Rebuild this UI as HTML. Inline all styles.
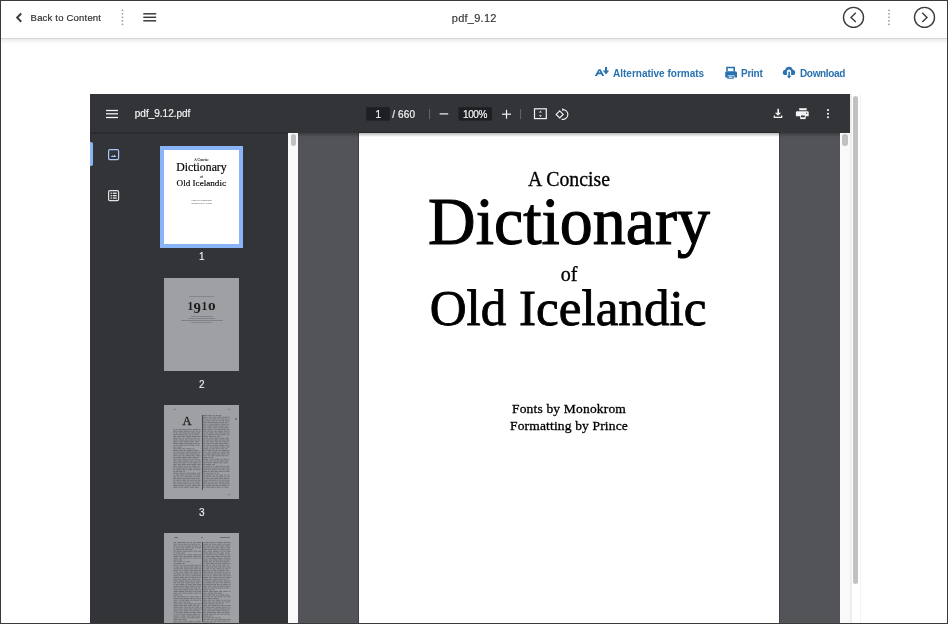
<!DOCTYPE html>
<html><head><meta charset="utf-8">
<style>
*{box-sizing:border-box;margin:0;padding:0}
html,body{width:948px;height:624px;overflow:hidden;background:#fff}
body{position:relative;will-change:transform;font-family:"Liberation Sans",sans-serif}
.abs{position:absolute}
#frame{position:absolute;left:0;top:0;width:948px;height:624px;border:1px solid #3a3a3a;z-index:50;pointer-events:none}
#hdr{position:absolute;left:0;top:0;width:948px;height:39px;background:#fff;border-bottom:1px solid #d6d6d6}
#shadow{position:absolute;left:0;top:39px;width:948px;height:5px;background:linear-gradient(#ececec,#fff)}
.txt{position:absolute;white-space:nowrap;line-height:1}
#viewer{position:absolute;left:90px;top:94px;width:760px;height:530px;background:#333438}
#tb{position:absolute;left:0;top:0;width:760px;height:39px;background:#333438}
#side{position:absolute;left:0;top:39px;width:198px;height:491px;background:#333438}
#strack{position:absolute;left:198px;top:39px;width:10px;height:491px;background:#f9f9f9}
#main{position:absolute;left:208px;top:39px;width:542px;height:491px;background:#535458}
#mtrack{position:absolute;left:750px;top:39px;width:10px;height:491px;background:#f9f9f9}
#page{position:absolute;left:269px;top:39px;width:420px;height:491px;background:#fff;box-shadow:0 0 0 1px rgba(0,0,0,0.22)}
.pg{position:absolute;width:420px;height:525px;z-index:4}
.thumbg{width:75px;background:#9fa0a4;z-index:2;overflow:hidden}
.col{background:repeating-linear-gradient(#7d7e82 0 0.9px,#95969a 0.9px 1.75px)}
.lbl{position:absolute;left:164.3px;width:75px;text-align:center;font-size:10px;font-weight:normal;-webkit-text-stroke:0.12px #f1f3f4;line-height:1;color:#f1f3f4;z-index:3}
.ptxt{position:absolute;left:0;width:420px;text-align:center;line-height:1;white-space:nowrap;font-family:"Liberation Serif",serif;color:#000;z-index:4}
.th .sm{opacity:0.55}
.serif{font-family:"Liberation Serif",serif;color:#111}
</style></head><body>
<div id="hdr"></div>
<div id="shadow"></div>
<svg class="abs" style="left:0;top:0" width="948" height="90" viewBox="0 0 948 90">
  <path d="M21.2 13.5 L17.2 17.6 L21.2 21.7" fill="none" stroke="#3b3b3b" stroke-width="2"/>
  <g fill="#9a9a9a"><circle cx="122.5" cy="10.3" r="0.9"/><circle cx="122.5" cy="13.8" r="0.9"/><circle cx="122.5" cy="17.3" r="0.9"/><circle cx="122.5" cy="20.8" r="0.9"/><circle cx="122.5" cy="24.3" r="0.9"/></g>
  <g stroke="#3b3b3b" stroke-width="1.5"><line x1="143.3" y1="13.8" x2="156.2" y2="13.8"/><line x1="143.3" y1="17.3" x2="156.2" y2="17.3"/><line x1="143.3" y1="20.8" x2="156.2" y2="20.8"/></g>
  <circle cx="853.5" cy="17.4" r="10" fill="none" stroke="#3b3b3b" stroke-width="1.4"/>
  <path d="M855.8 12.8 L851 17.4 L855.8 22" fill="none" stroke="#3b3b3b" stroke-width="1.4"/>
  <g fill="#9a9a9a"><circle cx="889" cy="10.3" r="0.9"/><circle cx="889" cy="13.8" r="0.9"/><circle cx="889" cy="17.3" r="0.9"/><circle cx="889" cy="20.8" r="0.9"/><circle cx="889" cy="24.3" r="0.9"/></g>
  <circle cx="924.5" cy="17.4" r="10" fill="none" stroke="#3b3b3b" stroke-width="1.4"/>
  <path d="M922.2 12.8 L927 17.4 L922.2 22" fill="none" stroke="#3b3b3b" stroke-width="1.4"/>
  <g fill="#2872b0">
    <path d="M594.8 76 L598.6 69.2 L600.6 69.2 L604.2 76 L602.1 76 L601.2 74.2 L598 74.2 L597 76 Z M598.7 72.6 L600.5 72.6 L599.6 70.8 Z"/>
    <path d="M605 67 L607 67 L607 70.6 L609.2 70.6 L606 74.6 L602.8 70.6 L605 70.6 Z"/>
    <path d="M726.2 66.8 h8.8 v4.5 h-1.6 v-3 h-5.6 v3 h-1.6 Z"/>
    <path d="M725.8 71.2 h9.6 a1.6 1.6 0 0 1 1.6 1.6 v4.6 h-2.6 v-2.2 h-6.6 v2.2 h-2.6 v-4.6 a1.6 1.6 0 0 1 1.6 -1.6 Z"/>
    <path d="M727.3 75.8 h6.4 v3 h-6.4 Z M728.7 76.6 v1.2 h3.6 v-1.2 Z" fill-rule="evenodd"/>
    <path d="M789 66.8 a4 4 0 0 1 3.8 2.9 a2.7 2.7 0 0 1 2.4 2.7 a2.7 2.7 0 0 1 -2.7 2.7 h-1.4 v-3.6 a2.1 2.1 0 0 0 -4.2 0 v3.6 h-1.4 a2.7 2.7 0 0 1 -2.7 -2.7 a2.7 2.7 0 0 1 2.4 -2.7 a4 4 0 0 1 3.8 -2.9 Z"/>
    <path d="M788.3 71.8 h1.6 v4 h1.5 l-2.3 2.6 l-2.3 -2.6 h1.5 Z"/>
  </g>
</svg>
<div class="txt" style="left:30.6px;top:13.2px;font-size:9.5px;letter-spacing:0.2px;color:#333;-webkit-text-stroke:0.2px #333">Back to Content</div>
<div class="txt" style="left:451.8px;top:13px;font-size:11px;letter-spacing:0.25px;color:#333;-webkit-text-stroke:0.15px #333">pdf_9.12</div>
<div class="txt" style="left:613px;top:68.5px;font-size:10px;font-weight:bold;color:#2872b0">Alternative formats</div>
<div class="txt" style="left:741px;top:68.5px;font-size:10px;letter-spacing:-0.25px;font-weight:bold;color:#2872b0">Print</div>
<div class="txt" style="left:800px;top:68.5px;font-size:10px;letter-spacing:-0.35px;font-weight:bold;color:#2872b0">Download</div>

<div id="viewer">
  <div id="tb"></div>
  <div id="side"></div>
  <div id="strack"></div>
  <div id="main"></div>
  <div id="mtrack"></div>
  <div id="page"></div>
</div>
<svg class="abs" style="left:0;top:0;z-index:5" width="948" height="140" viewBox="0 0 948 140">
  <g stroke="#f1f3f4" stroke-width="1.3"><line x1="106" y1="110.5" x2="118" y2="110.5"/><line x1="106" y1="113.8" x2="118" y2="113.8"/><line x1="106" y1="117.5" x2="118" y2="117.5"/></g>
  <rect x="366.3" y="107.2" width="23.5" height="13.4" fill="#1e1f22"/>
  <rect x="458.5" y="107.2" width="33.5" height="13.4" fill="#1e1f22"/>
  <line x1="429.6" y1="109" x2="429.6" y2="119.2" stroke="#6b6e72" stroke-width="0.9"/>
  <line x1="520.6" y1="109" x2="520.6" y2="119.2" stroke="#6b6e72" stroke-width="0.9"/>
  <line x1="439.6" y1="113.9" x2="448.2" y2="113.9" stroke="#f1f3f4" stroke-width="1.2"/>
  <g stroke="#f1f3f4" stroke-width="1.2"><line x1="502" y1="114.2" x2="511" y2="114.2"/><line x1="506.5" y1="109.8" x2="506.5" y2="118.7"/></g>
  <rect x="534.5" y="108.8" width="11.8" height="9.8" fill="none" stroke="#f1f3f4" stroke-width="1.2"/>
  <path d="M539 112.6 L540.4 110.7 L541.8 112.6 Z M539 115.2 L540.4 117.1 L541.8 115.2 Z" fill="#f1f3f4"/>
  <path d="M559.7 110.9 L563.2 114.4 L559.7 117.9 L556.2 114.4 Z" fill="none" stroke="#f1f3f4" stroke-width="1.2"/>
  <path d="M562.6 109.6 A4.9 4.9 0 1 1 561.6 119.2" fill="none" stroke="#f1f3f4" stroke-width="1.1"/>
  <path d="M562.3 108 L564.2 109.6 L562.3 111.3 Z" fill="#f1f3f4"/>
  <g fill="#f1f3f4">
    <rect x="777.4" y="108.8" width="1.6" height="4.4"/>
    <path d="M774.9 112.8 h6.2 l-3.1 2.9 Z"/>
    <path d="M773.7 115.5 h1.3 v1.3 h6 v-1.3 h1.3 v2.5 h-8.6 Z"/>
    <rect x="799.2" y="108.2" width="7.5" height="2.1"/>
    <path d="M798 111.3 h9.6 a1.1 1.1 0 0 1 1.1 1.1 v3.8 h-12.8 v-3.8 a1.1 1.1 0 0 1 1.1 -1.1 Z"/><rect x="800.2" y="114.9" width="5.5" height="4.2"/><rect x="801" y="115.5" width="3.8" height="1.7" fill="#333438"/><circle cx="806.6" cy="113.2" r="0.6" fill="#333438"/>
    <circle cx="828" cy="110.1" r="1.05"/><circle cx="828" cy="113.7" r="1.05"/><circle cx="828" cy="117.3" r="1.05"/>
  </g>
</svg>
<div class="txt" style="left:134.8px;top:109.3px;font-size:10px;color:#f1f3f4;-webkit-text-stroke:0.2px #f1f3f4;z-index:6">pdf_9.12.pdf</div>
<div class="txt" style="left:375.5px;top:109.8px;font-size:10px;color:#f1f3f4;-webkit-text-stroke:0.2px #f1f3f4;z-index:6">1</div>
<div class="txt" style="left:392.3px;top:109.8px;font-size:10px;letter-spacing:0.1px;color:#f1f3f4;-webkit-text-stroke:0.2px #f1f3f4;z-index:6">/ 660</div>
<div class="txt" style="left:463px;top:109.8px;font-size:10px;letter-spacing:-0.4px;color:#f1f3f4;-webkit-text-stroke:0.2px #f1f3f4;z-index:6">100%</div>
<div class="pg" style="left:359px;top:125.4px">
<div class="ptxt" style="top:43.6px;font-size:21.5px;transform:scaleX(0.92);-webkit-text-stroke:0.35px #000">A Concise</div>
<div class="ptxt" style="top:61.30px;font-size:69px;transform:scale(0.955,0.97);transform-origin:50% 57.8px;-webkit-text-stroke:1.1px #000">Dictionary</div>
<div class="ptxt" style="top:138.60px;font-size:20px;-webkit-text-stroke:0.35px #000">of</div>
<div class="ptxt" style="top:157.6px;font-size:50.5px;left:-1px;transform:scaleX(1.012);-webkit-text-stroke:0.85px #000">Old Icelandic</div>
<div class="ptxt sm" style="top:276.20px;font-size:13.5px;letter-spacing:0.18px;-webkit-text-stroke:0.3px #000">Fonts by Monokrom</div>
<div class="ptxt sm" style="top:293.7px;font-size:13.5px;letter-spacing:0.16px;-webkit-text-stroke:0.3px #000">Formatting by Prince</div>
</div>
<div class="pg th" style="left:164px;top:150px;transform:scale(0.17857);transform-origin:0 0;z-index:3">
<div class="ptxt" style="top:43.6px;font-size:21.5px;transform:scaleX(0.92);-webkit-text-stroke:0.35px #000">A Concise</div>
<div class="ptxt" style="top:61.30px;font-size:69px;transform:scale(0.955,0.97);transform-origin:50% 57.8px;-webkit-text-stroke:1.1px #000">Dictionary</div>
<div class="ptxt" style="top:138.60px;font-size:20px;-webkit-text-stroke:0.35px #000">of</div>
<div class="ptxt" style="top:157.6px;font-size:50.5px;left:-1px;transform:scaleX(1.012);-webkit-text-stroke:0.85px #000">Old Icelandic</div>
<div class="ptxt sm" style="top:276.20px;font-size:13.5px;letter-spacing:0.18px;-webkit-text-stroke:0.3px #000">Fonts by Monokrom</div>
<div class="ptxt sm" style="top:293.7px;font-size:13.5px;letter-spacing:0.16px;-webkit-text-stroke:0.3px #000">Formatting by Prince</div>
</div>
<div class="abs" style="left:90px;top:141.6px;width:2.6px;height:24.6px;background:#8ab4f8;border-radius:0 2px 2px 0;z-index:3"></div>
<svg class="abs" style="left:0;top:0;z-index:3" width="300" height="624" viewBox="0 0 300 624">
  <rect x="108.6" y="149.6" width="10" height="10" rx="1.3" fill="none" stroke="#a8c7fa" stroke-width="1.2"/>
  <path d="M110.8 157 L112.3 155.2 L113.3 156.3 L114.4 154.8 L116.4 157 Z" fill="#a8c7fa"/>
  <rect x="108.6" y="190.6" width="10" height="10" rx="1.3" fill="none" stroke="#e3e3e3" stroke-width="1.2"/>
  <g fill="#e3e3e3"><rect x="110.6" y="192.6" width="1.3" height="1.3"/><rect x="110.6" y="195" width="1.3" height="1.3"/><rect x="110.6" y="197.4" width="1.3" height="1.3"/>
  <rect x="112.8" y="192.6" width="3.9" height="1.3"/><rect x="112.8" y="195" width="3.9" height="1.3"/><rect x="112.8" y="197.4" width="3.9" height="1.3"/></g>
</svg>
<div class="abs" style="left:160px;top:146px;width:83.3px;height:102px;background:#8ab4f8;z-index:2"></div>
<div class="abs" style="left:164px;top:150px;width:75px;height:94px;background:#fff;z-index:2"></div>
<div class="lbl" style="top:252px">1</div>
<div class="abs thumbg" style="left:164px;top:277.6px;height:93.8px">
  <div class="abs" style="left:25.4px;top:18.3px;width:24.5px;height:0.8px;background:#85868a"></div>
  <svg class="abs" style="left:0;top:0" width="75" height="94" viewBox="164 277.6 75 94" font-family="Liberation Serif" font-weight="bold" fill="#1c1d1f">
    <text x="187.6" y="309.9" font-size="11.6">1</text>
    <text transform="translate(193.5 312.8) scale(0.95 1)" font-size="15.6">9</text>
    <text x="201.6" y="309.9" font-size="11.6">1</text>
    <text transform="translate(208 309.9) scale(0.98 1)" font-size="15.6">o</text>
  </svg>
  <div class="abs" style="left:26.5px;top:38.3px;width:22.4px;height:0.9px;background:#838488"></div>
  <div class="abs" style="left:24px;top:40.1px;width:27px;height:0.9px;background:#838488"></div>
  <div class="abs" style="left:17.1px;top:42.2px;width:41.5px;height:0.9px;background:#808185"></div>
  <div class="abs" style="left:26.5px;top:44px;width:21px;height:0.9px;background:#858689"></div>
</div>
<div class="lbl" style="top:380.2px">2</div>
<div class="abs thumbg" style="left:164px;top:405px;height:94px">
  <div class="abs" style="left:18.5px;top:10px;font-family:'Liberation Serif',serif;font-size:12.5px;line-height:1;color:#222;-webkit-text-stroke:0.3px #222">A</div>
  <div class="abs" style="left:37.8px;top:10px;width:0.9px;height:74.5px;background:#4a4b4e"></div>
  <div class="abs" style="left:10px;top:4px;width:1.5px;height:1px;background:#7a7b7e"></div>
  <div class="abs" style="left:64px;top:4px;width:1.5px;height:1px;background:#7a7b7e"></div>
  <div class="abs" style="left:64px;top:89px;width:1.5px;height:1px;background:#7a7b7e"></div>
  <div class="abs" style="left:70.5px;top:12.5px;width:2.5px;height:2.5px;background:#6a6b6e;border-radius:1px"></div>
</div>
<div class="lbl" style="top:508.3px">3</div>
<div class="abs thumbg" style="left:164px;top:532.8px;height:100px">
  <div class="abs" style="left:9.5px;top:4.5px;width:4px;height:1px;background:#6a6b6e"></div>
  <div class="abs" style="left:37px;top:4.5px;width:1.5px;height:1px;background:#6a6b6e"></div>
  <div class="abs" style="left:56px;top:4.5px;width:10px;height:1px;background:#6a6b6e"></div>
  <div class="abs" style="left:37.8px;top:9.5px;width:0.9px;height:80px;background:#4a4b4e"></div>
</div>
<div class="abs" style="left:291px;top:134px;width:5px;height:11.5px;background:#c1c1c1;border-radius:2.5px;z-index:6"></div>
<div class="abs" style="left:842.3px;top:134px;width:5.5px;height:12px;background:#c1c1c1;border-radius:2.75px;z-index:6"></div>
<div class="abs" style="left:850px;top:94px;width:1.5px;height:530px;background:#ededf0;z-index:5"></div>
<div class="abs" style="left:860px;top:94px;width:1px;height:530px;background:#f3f3f5;z-index:5"></div>
<div class="abs" style="left:853px;top:96px;width:5px;height:488px;background:#c1c1c1;border-radius:2.75px;z-index:6"></div>
<svg class="abs" style="left:0;top:0;z-index:2" width="300" height="624" viewBox="0 0 300 624"><path d="M173.20 429.50h2.10M176.23 429.50h1.79M178.89 429.50h2.96M182.48 429.50h3.53M186.63 429.50h3.23M190.50 429.50h1.86M193.17 429.50h4.81M198.64 429.50h1.86M173.20 431.25h3.81M177.81 431.25h5.41M183.84 431.25h4.93M189.51 431.25h2.08M192.25 431.25h2.73M195.99 431.25h2.22M199.11 431.25h1.39M173.20 433.00h1.75M175.58 433.00h2.32M178.84 433.00h3.21M182.81 433.00h3.84M187.48 433.00h2.70M191.18 433.00h4.30M196.20 433.00h3.80M173.20 434.75h4.42M178.36 434.75h5.42M184.44 434.75h3.17M188.59 434.75h2.11M191.54 434.75h1.66M194.14 434.75h4.56M173.20 436.50h2.75M176.90 436.50h3.88M181.67 436.50h3.32M186.01 436.50h5.28M192.13 436.50h4.16M196.92 436.50h3.58M173.20 438.25h4.79M178.73 438.25h3.04M182.71 438.25h1.59M185.13 438.25h2.17M187.96 438.25h1.74M190.68 438.25h2.02M193.42 438.25h3.06M197.52 438.25h1.82M173.20 440.00h5.03M179.24 440.00h4.96M184.94 440.00h3.16M188.88 440.00h5.04M194.99 440.00h2.10M197.79 440.00h2.43M173.20 441.75h3.86M177.79 441.75h1.52M180.11 441.75h2.98M183.97 441.75h5.31M190.23 441.75h3.56M194.70 441.75h4.20M173.20 443.50h4.62M178.86 443.50h4.69M184.34 443.50h3.10M188.09 443.50h4.04M192.76 443.50h1.77M195.23 443.50h2.15M198.15 443.50h1.71M173.20 445.25h1.91M175.89 445.25h1.60M178.53 445.25h3.96M183.16 445.25h2.51M186.44 445.25h2.96M190.06 445.25h4.90M196.05 445.25h3.36M173.20 447.00h2.87M176.80 447.00h4.82M173.20 448.75h3.61M177.49 448.75h3.67M181.77 448.75h3.61M186.47 448.75h4.95M192.38 448.75h2.00M173.20 450.50h4.59M178.65 450.50h4.62M184.04 450.50h2.39M187.43 450.50h5.44M193.90 450.50h4.72M173.20 452.25h2.41M176.47 452.25h2.92M180.00 452.25h1.61M182.35 452.25h2.54M185.84 452.25h5.33M191.99 452.25h5.25M198.33 452.25h2.17M173.20 454.00h2.41M176.31 454.00h2.32M179.54 454.00h5.10M185.66 454.00h3.42M190.00 454.00h4.70M195.34 454.00h4.14M173.20 455.75h4.50M178.54 455.75h2.21M181.75 455.75h2.83M185.58 455.75h5.39M191.76 455.75h3.11M195.94 455.75h4.40M173.20 457.50h2.10M176.36 457.50h4.73M181.76 457.50h4.81M187.65 457.50h4.13M192.56 457.50h3.69M196.92 457.50h1.56M173.20 459.25h3.61M177.87 459.25h3.24M182.14 459.25h4.80M187.65 459.25h2.51M190.91 459.25h2.46M194.26 459.25h2.54M197.61 459.25h2.02M173.20 461.00h3.33M177.42 461.00h5.12M183.35 461.00h5.17M189.37 461.00h3.63M193.86 461.00h1.57M196.26 461.00h2.23M199.09 461.00h1.41M173.20 462.75h4.40M178.48 462.75h2.80M182.14 462.75h3.72M186.86 462.75h1.92M189.66 462.75h2.49M192.89 462.75h4.59M198.34 462.75h2.16M173.20 464.50h3.27M177.38 464.50h3.52M181.76 464.50h4.27M186.85 464.50h3.63M191.33 464.50h5.27M197.54 464.50h2.96M173.20 466.25h3.74M178.01 466.25h4.86M183.54 466.25h1.99M186.35 466.25h1.79M188.86 466.25h1.79M191.58 466.25h4.64M197.27 466.25h2.12M173.20 468.00h2.07M176.31 468.00h5.37M182.39 468.00h5.31M188.50 468.00h3.45M193.05 468.00h4.83M198.56 468.00h1.94M173.20 469.75h2.28M176.24 469.75h4.39M181.24 469.75h3.72M185.78 469.75h1.57M188.12 469.75h4.00M192.97 469.75h1.76M195.82 469.75h4.65M173.20 471.50h1.66M175.85 471.50h2.58M179.09 471.50h3.19M183.34 471.50h1.68M173.20 473.25h5.18M179.26 473.25h4.30M184.21 473.25h1.73M186.88 473.25h3.20M190.72 473.25h5.25M196.89 473.25h3.61M173.20 475.00h1.77M176.00 475.00h3.32M180.08 475.00h3.71M184.86 475.00h2.57M188.09 475.00h3.61M192.42 475.00h1.94M195.04 475.00h1.70M197.44 475.00h2.75M173.20 476.75h2.66M176.71 476.75h2.21M179.69 476.75h1.57M181.99 476.75h1.56M184.52 476.75h3.70M188.92 476.75h3.40M193.39 476.75h1.93M196.32 476.75h3.23M173.20 478.50h3.07M177.13 478.50h4.25M182.47 478.50h2.87M186.35 478.50h4.33M191.60 478.50h3.12M195.49 478.50h1.72M197.87 478.50h1.78M173.20 480.25h2.15M176.00 480.25h4.87M181.90 480.25h4.18M186.82 480.25h2.47M190.03 480.25h3.34M194.05 480.25h3.28M198.07 480.25h2.43M173.20 482.00h2.48M176.76 482.00h2.74M180.28 482.00h1.50M182.57 482.00h3.40M186.82 482.00h2.30M189.98 482.00h1.52M192.23 482.00h1.86M194.89 482.00h1.67M197.17 482.00h2.72M173.20 483.75h3.62M177.79 483.75h4.13M182.88 483.75h5.02M188.69 483.75h2.80M192.59 483.75h2.10M195.65 483.75h4.07M173.20 485.50h5.07M179.18 485.50h4.44M184.62 485.50h2.06M187.54 485.50h3.52M192.08 485.50h4.72M197.81 485.50h2.69M173.20 487.25h4.27M178.19 487.25h1.62M180.48 487.25h2.94M184.07 487.25h4.84M189.80 487.25h4.01M194.72 487.25h4.22M203.00 415.50h4.49M208.34 415.50h3.64M212.91 415.50h1.76M215.65 415.50h2.51M218.79 415.50h2.56M203.00 417.25h4.46M208.55 417.25h3.48M212.81 417.25h3.42M217.17 417.25h4.57M222.65 417.25h4.07M227.36 417.25h2.04M203.00 419.00h2.72M206.60 419.00h1.55M208.78 419.00h2.58M212.29 419.00h4.27M217.50 419.00h2.66M221.02 419.00h3.36M225.21 419.00h1.97M228.23 419.00h1.17M203.00 420.75h1.57M205.40 420.75h4.78M211.26 420.75h3.30M215.30 420.75h2.34M218.71 420.75h2.34M221.94 420.75h2.07M224.87 420.75h4.53M203.00 422.50h3.53M207.58 422.50h4.31M212.61 422.50h5.09M218.54 422.50h1.60M220.74 422.50h3.47M225.03 422.50h2.71M203.00 424.25h2.76M206.78 424.25h1.51M209.27 424.25h4.86M214.78 424.25h5.21M220.95 424.25h5.11M226.80 424.25h2.60M203.00 426.00h3.86M207.64 426.00h3.21M211.59 426.00h1.69M213.93 426.00h4.84M219.51 426.00h5.24M225.48 426.00h2.56M203.00 427.75h2.99M207.07 427.75h5.04M213.11 427.75h4.02M218.19 427.75h5.26M224.33 427.75h4.38M203.00 429.50h3.30M207.28 429.50h4.08M212.10 429.50h1.70M214.86 429.50h2.01M217.71 429.50h2.87M221.33 429.50h4.46M226.87 429.50h2.53M203.00 431.25h3.73M207.53 431.25h2.17M210.38 431.25h2.33M213.76 431.25h3.49M217.96 431.25h5.13M224.18 431.25h3.30M228.15 431.25h1.25M203.00 433.00h1.86M205.58 433.00h2.53M209.00 433.00h5.05M215.03 433.00h3.15M218.98 433.00h3.60M223.37 433.00h2.85M226.85 433.00h2.55M203.00 434.75h3.51M207.43 434.75h4.95M213.09 434.75h2.58M216.40 434.75h3.10M220.32 434.75h5.32M226.66 434.75h2.74M203.00 436.50h5.08M208.92 436.50h3.85M213.37 436.50h3.07M217.50 436.50h2.79M203.00 438.25h2.49M206.15 438.25h2.12M209.13 438.25h4.23M214.43 438.25h4.39M219.74 438.25h4.56M225.12 438.25h3.71M203.00 440.00h2.43M206.49 440.00h4.08M211.32 440.00h2.01M214.06 440.00h4.05M219.06 440.00h1.95M221.64 440.00h3.60M226.13 440.00h3.05M203.00 441.75h1.54M205.29 441.75h3.34M209.71 441.75h4.08M214.84 441.75h3.40M218.95 441.75h2.49M222.52 441.75h4.32M227.59 441.75h1.59M203.00 443.50h3.18M206.91 443.50h4.17M212.14 443.50h2.41M215.16 443.50h2.85M218.83 443.50h4.23M223.76 443.50h4.69M203.00 445.25h2.32M206.41 445.25h2.75M210.16 445.25h2.42M213.30 445.25h4.54M218.59 445.25h5.31M224.74 445.25h2.25M227.70 445.25h1.70M203.00 447.00h2.09M205.88 447.00h2.35M209.32 447.00h2.07M212.01 447.00h1.74M214.55 447.00h5.09M220.69 447.00h4.43M226.22 447.00h3.18M203.00 448.75h5.24M209.22 448.75h1.63M211.78 448.75h3.01M215.58 448.75h2.83M219.09 448.75h1.51M221.34 448.75h2.91M225.32 448.75h1.99M203.00 450.50h2.93M206.94 450.50h4.79M212.54 450.50h1.70M215.08 450.50h2.99M219.13 450.50h2.27M222.18 450.50h5.09M227.88 450.50h1.52M203.00 452.25h1.66M205.28 452.25h1.75M208.09 452.25h2.53M211.59 452.25h5.09M217.46 452.25h2.59M221.12 452.25h3.97M225.82 452.25h3.58M203.00 454.00h1.52M205.49 454.00h5.17M211.58 454.00h5.27M217.46 454.00h2.44M220.73 454.00h5.33M227.14 454.00h2.26M203.00 455.75h3.47M207.54 455.75h2.23M210.77 455.75h4.45M216.24 455.75h4.59M221.73 455.75h2.81M225.30 455.75h2.95M203.00 457.50h4.51M208.24 457.50h1.76M210.61 457.50h2.91M203.00 459.25h5.03M209.13 459.25h2.56M212.33 459.25h1.89M215.06 459.25h4.34M220.23 459.25h2.44M223.47 459.25h3.98M228.39 459.25h1.01M203.00 461.00h1.98M206.01 461.00h2.68M209.56 461.00h2.99M213.52 461.00h2.30M216.55 461.00h2.48M219.70 461.00h5.04M225.63 461.00h2.81M203.00 462.75h3.53M207.24 462.75h4.73M212.91 462.75h5.46M219.02 462.75h3.40M223.43 462.75h4.86M203.00 464.50h1.98M205.67 464.50h5.39M211.96 464.50h2.84M203.00 466.25h3.30M207.03 466.25h4.61M212.71 466.25h1.92M215.53 466.25h3.98M220.22 466.25h2.97M223.87 466.25h2.32M226.91 466.25h2.49M203.00 468.00h1.55M205.31 468.00h4.21M210.21 468.00h2.75M213.67 468.00h4.68M219.22 468.00h1.75M221.62 468.00h3.08M225.58 468.00h3.82M203.00 469.75h4.28M208.09 469.75h2.63M211.47 469.75h5.31M217.54 469.75h3.77M222.09 469.75h3.17M226.29 469.75h3.11M203.00 471.50h4.41M208.11 471.50h1.52M210.69 471.50h3.20M214.89 471.50h3.12M219.06 471.50h3.34M223.08 471.50h1.56M225.52 471.50h3.88M203.00 473.25h2.98M206.84 473.25h2.08M209.66 473.25h3.58M214.31 473.25h1.94M217.09 473.25h2.04M203.00 475.00h2.01M206.08 475.00h5.40M212.32 475.00h1.71M215.10 475.00h3.05M219.20 475.00h3.98M224.20 475.00h2.14M227.33 475.00h2.07M203.00 476.75h4.82M208.51 476.75h2.37M211.68 476.75h3.57M216.04 476.75h1.99M218.76 476.75h4.40M224.21 476.75h1.66M226.75 476.75h2.65M203.00 478.50h1.97M205.87 478.50h3.70M210.48 478.50h2.72M214.02 478.50h3.83M218.66 478.50h4.14M223.62 478.50h3.25M227.49 478.50h1.91M203.00 480.25h4.55M208.54 480.25h3.33M212.57 480.25h3.39M216.61 480.25h2.01M219.44 480.25h1.87M222.13 480.25h3.54M226.29 480.25h3.11M203.00 482.00h4.61M208.47 482.00h1.72M211.04 482.00h3.01M215.12 482.00h2.04M218.20 482.00h5.48M224.65 482.00h4.75M203.00 483.75h3.47M207.55 483.75h5.16M213.39 483.75h4.65M219.11 483.75h1.76M221.65 483.75h4.52M226.85 483.75h2.55M203.00 485.50h2.07M205.93 485.50h5.18M211.81 485.50h2.55M215.21 485.50h2.78M218.61 485.50h2.23M221.52 485.50h5.25M227.70 485.50h1.70M203.00 487.25h1.96M205.83 487.25h4.05M210.65 487.25h4.99M216.52 487.25h3.82M221.38 487.25h1.92M224.40 487.25h4.02M173.50 542.50h2.56M177.15 542.50h3.81M181.74 542.50h4.56M187.12 542.50h2.21M190.30 542.50h1.69M193.01 542.50h2.51M196.44 542.50h4.56M173.50 544.25h2.75M176.85 544.25h1.64M179.16 544.25h3.96M183.94 544.25h3.55M188.54 544.25h2.03M191.28 544.25h4.11M196.01 544.25h1.51M198.29 544.25h1.93M173.50 546.00h3.83M178.23 546.00h2.32M181.46 546.00h3.40M185.52 546.00h5.25M191.49 546.00h2.10M194.24 546.00h4.05M199.33 546.00h1.67M173.50 547.75h1.55M175.97 547.75h3.75M180.49 547.75h4.08M185.40 547.75h5.25M191.61 547.75h2.49M195.16 547.75h1.68M197.70 547.75h3.12M173.50 549.50h1.55M175.92 549.50h5.26M181.86 549.50h2.30M185.06 549.50h3.53M189.51 549.50h2.95M173.50 551.25h2.70M176.83 551.25h5.06M182.87 551.25h4.36M187.84 551.25h4.88M193.69 551.25h3.36M198.02 551.25h2.98M173.50 553.00h1.66M175.92 553.00h4.50M181.37 553.00h3.57M173.50 554.75h3.72M178.03 554.75h4.65M183.55 554.75h2.56M187.03 554.75h5.36M193.10 554.75h5.02M198.73 554.75h2.27M173.50 556.50h5.28M179.75 556.50h2.81M183.60 556.50h2.81M187.13 556.50h5.13M193.18 556.50h4.27M198.38 556.50h2.62M173.50 558.25h4.29M178.82 558.25h3.25M183.03 558.25h3.78M187.57 558.25h2.35M190.82 558.25h1.81M193.69 558.25h2.08M196.38 558.25h1.93M199.37 558.25h1.63M173.50 560.00h4.27M178.69 560.00h3.64M173.50 561.75h2.95M177.46 561.75h4.78M183.29 561.75h1.76M186.08 561.75h3.79M173.50 563.50h1.95M176.07 563.50h4.89M181.96 563.50h2.62M173.50 565.25h2.65M176.80 565.25h1.89M179.67 565.25h2.32M182.75 565.25h3.20M186.55 565.25h2.53M189.82 565.25h4.36M194.97 565.25h2.78M198.84 565.25h2.16M173.50 567.00h1.62M175.93 567.00h3.25M180.16 567.00h2.89M184.00 567.00h3.65M188.36 567.00h4.95M193.96 567.00h4.78M199.42 567.00h1.51M173.50 568.75h5.41M179.51 568.75h3.46M183.82 568.75h4.69M189.20 568.75h3.48M193.45 568.75h4.83M199.01 568.75h1.99M173.50 570.50h4.30M178.65 570.50h1.94M181.51 570.50h1.82M184.32 570.50h4.29M189.60 570.50h4.01M194.39 570.50h3.11M198.30 570.50h2.70M173.50 572.25h1.60M175.80 572.25h2.55M179.41 572.25h3.50M183.70 572.25h5.04M189.45 572.25h3.34M193.66 572.25h4.52M199.16 572.25h1.84M173.50 574.00h2.12M176.64 574.00h4.15M181.76 574.00h2.18M184.76 574.00h4.59M190.24 574.00h2.00M193.08 574.00h5.04M198.84 574.00h2.16M173.50 575.75h4.87M179.05 575.75h2.12M181.90 575.75h2.81M185.57 575.75h2.14M188.47 575.75h2.26M191.82 575.75h4.41M196.89 575.75h4.11M173.50 577.50h5.44M179.93 577.50h4.43M185.18 577.50h2.28M188.39 577.50h1.93M191.02 577.50h3.05M194.69 577.50h3.10M198.78 577.50h2.22M173.50 579.25h3.35M177.52 579.25h3.91M182.24 579.25h4.46M187.76 579.25h3.22M191.87 579.25h4.50M197.17 579.25h2.41M173.50 581.00h4.60M179.05 581.00h4.91M184.90 581.00h4.07M189.79 581.00h2.75M193.46 581.00h1.89M196.16 581.00h4.63M173.50 582.75h2.50M176.81 582.75h3.32M181.04 582.75h3.14M185.12 582.75h5.22M191.03 582.75h4.12M196.14 582.75h3.05M173.50 584.50h1.65M176.02 584.50h2.14M179.16 584.50h5.26M185.28 584.50h1.90M188.07 584.50h3.66M192.69 584.50h3.55M197.16 584.50h3.84M173.50 586.25h5.29M179.50 586.25h4.24M184.53 586.25h4.55M189.74 586.25h5.44M195.96 586.25h1.73M198.42 586.25h2.58M173.50 588.00h3.18M177.63 588.00h2.91M181.27 588.00h2.40M184.64 588.00h5.26M190.76 588.00h2.38M194.14 588.00h3.07M197.91 588.00h2.02M173.50 589.75h4.04M178.37 589.75h3.75M182.83 589.75h5.36M188.97 589.75h4.06M194.03 589.75h4.76M199.63 589.75h1.37M173.50 591.50h4.83M179.11 591.50h4.90M184.75 591.50h3.00M188.48 591.50h3.20M192.38 591.50h1.51M194.85 591.50h2.62M198.20 591.50h2.71M173.50 593.25h4.05M178.48 593.25h2.95M182.49 593.25h4.92M188.04 593.25h4.81M193.90 593.25h4.64M199.21 593.25h1.79M173.50 595.00h5.31M179.74 595.00h2.17M173.50 596.75h2.43M176.92 596.75h2.89M180.48 596.75h5.12M186.60 596.75h2.17M189.81 596.75h3.93M194.74 596.75h4.17M199.96 596.75h1.04M173.50 598.50h4.27M178.64 598.50h4.47M183.92 598.50h5.03M189.83 598.50h2.56M193.11 598.50h2.06M196.01 598.50h1.73M198.58 598.50h2.08M173.50 600.25h3.66M178.19 600.25h1.53M180.74 600.25h3.37M184.99 600.25h4.16M190.17 600.25h3.00M193.98 600.25h5.34M199.96 600.25h1.04M173.50 602.00h4.23M178.80 602.00h2.82M182.71 602.00h3.54M187.09 602.00h3.04M173.50 603.75h4.00M178.27 603.75h4.95M184.00 603.75h3.40M188.26 603.75h4.58M193.55 603.75h3.24M197.60 603.75h3.40M173.50 605.50h4.81M179.11 605.50h3.51M183.36 605.50h3.53M187.98 605.50h4.12M193.09 605.50h2.82M196.67 605.50h2.70M173.50 607.25h4.64M178.76 607.25h4.39M184.19 607.25h3.68M188.50 607.25h2.70M191.80 607.25h2.26M195.12 607.25h3.93M199.99 607.25h1.01M173.50 609.00h3.97M178.38 609.00h4.29M183.56 609.00h4.22M188.49 609.00h4.17M193.49 609.00h4.55M198.69 609.00h2.23M173.50 610.75h5.16M179.58 610.75h2.98M183.57 610.75h4.65M189.10 610.75h2.53M192.38 610.75h3.19M196.33 610.75h3.22M173.50 612.50h1.72M176.10 612.50h1.66M178.42 612.50h4.74M184.05 612.50h5.17M190.05 612.50h1.56M192.40 612.50h3.87M197.33 612.50h3.67M173.50 614.25h1.91M176.33 614.25h2.35M179.36 614.25h1.56M181.52 614.25h4.24M186.42 614.25h5.37M192.43 614.25h4.98M198.07 614.25h1.57M173.50 616.00h4.43M178.63 616.00h1.70M181.32 616.00h4.35M186.70 616.00h4.42M191.76 616.00h4.01M196.73 616.00h3.34M173.50 617.75h5.36M179.82 617.75h1.55M181.97 617.75h4.10M187.08 617.75h1.82M189.65 617.75h4.42M194.76 617.75h4.94M173.50 619.50h3.80M178.12 619.50h4.21M183.00 619.50h3.80M173.50 621.25h4.02M178.33 621.25h3.04M182.36 621.25h5.28M188.64 621.25h3.77M193.15 621.25h1.74M195.98 621.25h4.31M173.50 623.00h3.92M178.51 623.00h4.83M184.24 623.00h2.73M187.79 623.00h5.05M193.63 623.00h4.24M198.77 623.00h2.23M203.00 542.50h1.51M205.24 542.50h3.19M209.32 542.50h4.76M215.13 542.50h1.67M217.82 542.50h4.75M223.60 542.50h3.79M228.12 542.50h2.38M203.00 544.25h5.15M208.93 544.25h1.84M211.65 544.25h4.69M217.04 544.25h4.50M222.60 544.25h2.44M225.94 544.25h4.21M203.00 546.00h2.52M206.49 546.00h4.67M211.99 546.00h1.85M214.85 546.00h4.59M220.15 546.00h3.82M225.02 546.00h5.04M203.00 547.75h3.86M207.55 547.75h2.27M210.51 547.75h4.30M215.60 547.75h3.76M220.16 547.75h3.57M224.40 547.75h1.68M227.18 547.75h3.00M203.00 549.50h4.65M208.33 549.50h3.89M212.99 549.50h3.58M217.18 549.50h1.63M219.91 549.50h4.96M225.71 549.50h3.77M203.00 551.25h3.20M207.28 551.25h4.57M212.86 551.25h5.35M218.94 551.25h1.65M221.29 551.25h2.22M224.15 551.25h1.70M226.74 551.25h3.76M203.00 553.00h5.14M208.77 553.00h3.89M213.46 553.00h1.98M216.52 553.00h2.53M219.93 553.00h4.06M225.07 553.00h4.18M203.00 554.75h2.14M206.22 554.75h5.47M212.40 554.75h1.65M214.78 554.75h2.91M218.74 554.75h5.12M224.88 554.75h1.69M227.56 554.75h2.94M203.00 556.50h1.72M205.40 556.50h4.52M210.98 556.50h4.21M215.94 556.50h3.87M220.79 556.50h1.92M223.47 556.50h2.53M226.66 556.50h3.43M203.00 558.25h2.07M206.01 558.25h1.55M208.52 558.25h2.28M211.42 558.25h5.21M217.34 558.25h5.24M223.61 558.25h5.05M229.33 558.25h1.17M203.00 560.00h4.87M208.78 560.00h3.31M212.86 560.00h4.79M218.49 560.00h4.01M223.18 560.00h2.39M226.19 560.00h4.31M203.00 561.75h4.98M208.72 561.75h3.15M212.54 561.75h2.58M216.15 561.75h2.84M219.67 561.75h3.46M223.89 561.75h5.11M203.00 563.50h1.73M205.77 563.50h4.17M210.65 563.50h3.41M214.81 563.50h2.53M218.04 563.50h2.96M222.09 563.50h5.49M228.65 563.50h1.85M203.00 565.25h1.73M205.69 565.25h2.67M209.46 565.25h1.56M212.02 565.25h2.86M215.56 565.25h1.51M218.08 565.25h3.61M222.38 565.25h3.24M226.68 565.25h2.37M203.00 567.00h2.22M206.21 567.00h4.35M211.25 567.00h1.82M213.71 567.00h3.93M218.49 567.00h2.60M221.79 567.00h3.95M226.70 567.00h3.80M203.00 568.75h1.76M205.73 568.75h3.13M209.82 568.75h1.72M212.55 568.75h2.84M216.41 568.75h4.96M222.22 568.75h1.56M224.83 568.75h3.41M229.27 568.75h1.23M203.00 570.50h2.97M206.65 570.50h2.98M210.53 570.50h1.52M212.91 570.50h3.28M217.05 570.50h1.98M219.99 570.50h4.77M225.79 570.50h2.78M203.00 572.25h4.51M208.14 572.25h4.99M214.20 572.25h3.48M218.54 572.25h3.62M223.03 572.25h1.58M225.70 572.25h2.39M228.78 572.25h1.72M203.00 574.00h1.62M205.27 574.00h4.30M210.26 574.00h1.57M212.73 574.00h3.81M217.40 574.00h4.31M222.36 574.00h4.98M228.30 574.00h1.68M203.00 575.75h3.50M207.24 575.75h1.99M210.03 575.75h2.05M212.98 575.75h4.94M218.60 575.75h3.79M223.36 575.75h2.16M226.53 575.75h3.97M203.00 577.50h4.86M208.72 577.50h3.08M212.87 577.50h4.61M218.25 577.50h2.46M221.48 577.50h3.24M225.81 577.50h4.69M203.00 579.25h4.89M208.52 579.25h3.57M213.17 579.25h5.24M219.13 579.25h3.19M223.23 579.25h2.96M227.06 579.25h1.78M203.00 581.00h1.58M205.25 581.00h5.38M211.62 581.00h5.25M217.78 581.00h4.74M223.56 581.00h5.04M229.22 581.00h1.28M203.00 582.75h2.59M206.46 582.75h5.20M212.57 582.75h2.50M215.94 582.75h3.23M220.25 582.75h2.65M223.65 582.75h4.09M228.40 582.75h2.10M203.00 584.50h2.57M206.41 584.50h3.64M210.72 584.50h2.00M213.38 584.50h2.67M216.86 584.50h2.65M220.23 584.50h1.85M222.95 584.50h4.86M228.72 584.50h1.78M203.00 586.25h4.34M208.17 586.25h3.69M212.77 586.25h3.38M216.90 586.25h2.47M220.08 586.25h3.55M224.42 586.25h3.84M228.87 586.25h1.63M203.00 588.00h3.73M207.57 588.00h2.64M211.31 588.00h2.68M214.97 588.00h2.13M217.74 588.00h4.99M223.55 588.00h1.75M226.09 588.00h3.26M203.00 589.75h5.34M209.31 589.75h2.12M212.19 589.75h2.15M203.00 591.50h4.90M208.91 591.50h3.57M213.45 591.50h4.47M218.90 591.50h3.40M223.30 591.50h4.33M228.69 591.50h1.81M203.00 593.25h3.84M207.69 593.25h5.35M213.93 593.25h3.17M218.09 593.25h3.69M203.00 595.00h3.31M207.14 595.00h4.39M212.28 595.00h3.06M216.22 595.00h3.04M220.02 595.00h4.65M225.69 595.00h3.50M203.00 596.75h2.72M206.39 596.75h3.80M211.08 596.75h1.85M213.99 596.75h2.80M217.81 596.75h4.85M223.74 596.75h2.32M226.87 596.75h3.63M203.00 598.50h3.49M207.55 598.50h4.59M213.01 598.50h5.49M203.00 600.25h4.24M208.04 600.25h2.93M211.86 600.25h2.90M215.84 600.25h4.21M220.91 600.25h1.90M223.59 600.25h3.10M227.58 600.25h2.92M203.00 602.00h3.45M207.27 602.00h4.00M212.36 602.00h2.87M216.10 602.00h4.76M221.55 602.00h2.77M225.41 602.00h4.80M203.00 603.75h4.26M208.27 603.75h5.46M214.77 603.75h3.18M218.64 603.75h2.66M222.15 603.75h1.40M203.00 605.50h4.02M207.92 605.50h2.91M211.93 605.50h4.05M216.60 605.50h3.15M220.74 605.50h2.73M224.41 605.50h1.52M226.68 605.50h3.82M203.00 607.25h2.29M206.14 607.25h3.71M210.58 607.25h4.09M215.53 607.25h5.49M221.91 607.25h3.14M225.72 607.25h2.13M228.82 607.25h1.68M203.00 609.00h3.59M207.60 609.00h3.95M212.56 609.00h1.75M214.91 609.00h4.58M220.26 609.00h4.36M225.39 609.00h2.18M228.31 609.00h1.90M203.00 610.75h2.90M206.72 610.75h3.04M210.39 610.75h5.06M216.34 610.75h5.34M222.50 610.75h3.98M227.21 610.75h1.68M203.00 612.50h2.76M206.81 612.50h4.76M212.32 612.50h3.91M217.31 612.50h3.48M221.87 612.50h2.47M225.14 612.50h4.37M203.00 614.25h5.00M208.84 614.25h4.67M214.24 614.25h2.19M217.21 614.25h2.25M220.54 614.25h2.66M224.08 614.25h1.96M226.91 614.25h3.04M203.00 616.00h4.80M208.58 616.00h2.48M211.75 616.00h1.19M203.00 617.75h2.87M206.54 617.75h4.32M211.51 617.75h2.58M215.11 617.75h2.01M217.94 617.75h2.44M203.00 619.50h2.91M206.87 619.50h3.01M210.96 619.50h2.33M214.37 619.50h3.52M218.60 619.50h3.31M222.58 619.50h4.33M227.63 619.50h2.87M203.00 621.25h2.49M206.39 621.25h2.35M209.78 621.25h1.99M212.62 621.25h3.67M217.03 621.25h4.59M222.41 621.25h4.13M227.42 621.25h2.74M203.00 623.00h4.90M208.66 623.00h4.15" stroke="#55565a" stroke-opacity="0.6" stroke-width="0.95" fill="none"/></svg>
<div class="abs" style="left:90px;top:132px;width:198px;height:2px;background:linear-gradient(rgba(0,0,0,0.12),rgba(0,0,0,0.22));z-index:5"></div>
<div class="abs" style="left:298px;top:133px;width:542px;height:4px;background:linear-gradient(rgba(0,0,0,0.28),rgba(0,0,0,0));z-index:5"></div>
<div id="frame"></div>
</body></html>
